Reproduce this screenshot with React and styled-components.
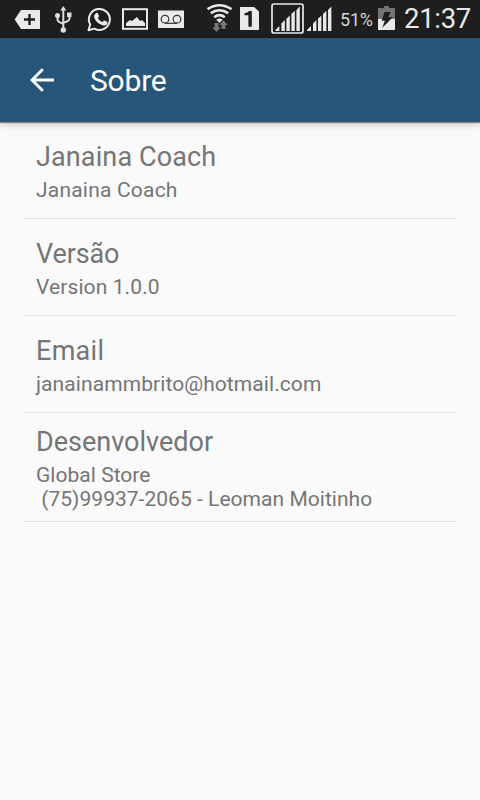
import React from 'react';
import styled, { createGlobalStyle } from 'styled-components';

const GlobalStyle = createGlobalStyle`
  * { box-sizing: border-box; }
  body { margin: 0; background: #fafafa; font-family: Roboto, "Noto Sans", sans-serif; }
`;

const Screen = styled.div`
  display: flex;
  flex-direction: column;
  width: 480px;
  height: 800px;
  overflow: hidden;
  background: #fafafa;
`;

const StatusBar = styled.header`
  display: flex;
  align-items: flex-start;
  height: 38px;
  flex: none;
  background: #1e1e1e;
  color: #e9e9e9;
`;

const StatusIcon = styled.svg`
  display: block;
  flex: none;
  width: ${(p) => p.$width}px;
  height: 38px;
  margin-left: ${(p) => p.$gap}px;
`;

const BatteryText = styled.span`
  flex: none;
  width: 35px;
  margin-left: 7px;
  padding-top: 9px;
  font-size: 18px;
  line-height: 22px;
  letter-spacing: -0.2px;
  white-space: nowrap;
  color: #d6d6d6;
`;

const Clock = styled.time`
  flex: none;
  margin-left: 9px;
  padding-top: 3px;
  font-size: 27.5px;
  line-height: 32px;
  letter-spacing: -0.3px;
  white-space: nowrap;
`;

const Toolbar = styled.nav`
  display: flex;
  align-items: center;
  flex: none;
  height: 84px;
  padding-left: 27px;
  background: #28567a;
  color: #fff;
  border-bottom: 1px solid #38566d;
  box-shadow: 0 1px 1px rgba(0, 0, 0, 0.4), 0 3px 7px rgba(0, 0, 0, 0.18);
`;

const BackButton = styled.button`
  display: flex;
  width: 30px;
  height: 30px;
  padding: 0;
  border: 0;
  background: none;
  color: inherit;
`;

const PageTitle = styled.h1`
  margin: 2px 0 0 33px;
  font-size: 30px;
  line-height: 36px;
  font-weight: 400;
  letter-spacing: -0.2px;
`;

const List = styled.main`
  padding: 0 24px;
`;

const Item = styled.section`
  height: ${(p) => (p.$tall ? 109 : 97)}px;
  padding: ${(p) => (p.$tall ? 13 : 19)}px 12px 0;
  border-bottom: 1px solid #dedede;
  color: #757575;
`;

const ItemTitle = styled.h2`
  margin: 0 0 5px;
  font-size: 27px;
  line-height: 32px;
  font-weight: 400;
  letter-spacing: ${(p) => p.$spacing}px;
`;

const ItemText = styled.p`
  margin: 0;
  font-size: 21px;
  line-height: 24px;
  letter-spacing: ${(p) => p.$spacing}px;
  white-space: pre;
`;

const items = [
  { title: 'Janaina Coach', text: 'Janaina Coach', titleSpacing: 0.12, textSpacing: 0.2 },
  { title: 'Versão', text: 'Version 1.0.0', titleSpacing: -0.15, textSpacing: 0.1 },
  { title: 'Email', text: 'janainammbrito@hotmail.com', titleSpacing: 0.3, textSpacing: 0.08 },
  {
    title: 'Desenvolvedor',
    text: 'Global Store\n (75)99937-2065 - Leoman Moitinho',
    titleSpacing: 0,
    textSpacing: 0.03,
    tall: true,
  },
];

const SignalBars = ({ x }) => (
  <g fill="#e9e9e9">
    <path d={`M${x} 31v-1l4-4v5z`} />
    <path d={`M${x + 6} 31v-7.5l3.4-3.4v10.9z`} />
    <path d={`M${x + 11} 31v-12.3l3.4-3.3v15.6z`} />
    <path d={`M${x + 16} 31v-17l3.4-3.3v20.3z`} />
    <path d={`M${x + 21} 31v-21l3.4-3.4v24.4z`} />
  </g>
);

function Status() {
  return (
    <StatusBar>
      <StatusIcon $width={26} $gap={14} viewBox="14 0 26 38">
        <path d="M14.7 19.5 21 10H40v19H21z" fill="#e9e9e9" />
        <path d="M24 19.5h11M29.5 14v11" stroke="#1e1e1e" strokeWidth="2.4" />
      </StatusIcon>
      <StatusIcon $width={18} $gap={14} viewBox="54 0 18 38" fill="none" stroke="#dedede" strokeWidth="2">
        <path d="M63.3 9v21M57.5 15v4.5q0 2.5 5.8 4.2M69.5 15v3.5q0 2.5-6.2 4.2" />
        <path d="M63.3 6l3 4.5h-6z" fill="#dedede" stroke="none" />
        <circle cx="57.5" cy="15.5" r="2.5" fill="#dedede" stroke="none" />
        <rect x="67" y="12.5" width="4.5" height="4.5" fill="#dedede" stroke="none" />
        <circle cx="63.3" cy="30" r="2.7" fill="#dedede" stroke="none" />
      </StatusIcon>
      <StatusIcon $width={25} $gap={15} viewBox="87 0 25 38">
        <path d="M88.5 30.3 90.2 24.5A10.5 10.5 0 1 1 94.3 28.6z" fill="none" stroke="#e9e9e9" strokeWidth="2" strokeLinejoin="round" />
        <path d="M96 13.2c.8-.6 1.6-.5 2 .4l.9 2c.3.8-.1 1.3-1 2.3 1 2 2.6 3.4 4.6 4.2 1-1.2 1.4-1.8 2.1-1.5l2.3 1.1c.8.4.8.7.5 1.7-.5 1.6-2.7 2.4-4.4 2-4.3-1-8.2-4.6-8.9-8.3-.3-1.5.6-3 1.9-3.9z" fill="#e9e9e9" />
      </StatusIcon>
      <StatusIcon $width={26} $gap={10} viewBox="122 0 26 38">
        <rect x="123" y="9.2" width="24" height="19.6" fill="none" stroke="#e9e9e9" strokeWidth="2" />
        <path d="M126 26v-3l4-3 2 1 5-4 3 4 2-1 3 3v3z" fill="#e9e9e9" />
      </StatusIcon>
      <StatusIcon $width={26} $gap={10} viewBox="158 0 26 38">
        <rect x="158" y="10.5" width="26" height="17.5" fill="#e9e9e9" />
        <g fill="none" stroke="#333" strokeWidth="1.2">
          <circle cx="165" cy="19.2" r="3.8" />
          <circle cx="177" cy="19.2" r="3.8" />
          <path d="M165 23.3h12" />
        </g>
      </StatusIcon>
      <StatusIcon $width={26} $gap={23} viewBox="207 0 26 38">
        <g fill="none" stroke="#e9e9e9" strokeWidth="2.6">
          <path d="M207.5 9.2Q219.5 1.2 231.5 9.2" />
          <path d="M210.8 13.2Q219.5 7.3 228.2 13.2" />
          <path d="M214.2 17.2Q219.5 13 224.8 17.2" />
        </g>
        <path d="M216.3 19.8Q219.5 17.3 222.7 19.8L219.5 23z" fill="#e9e9e9" />
        <path d="M214.5 23h4v4.5h2.2L216.5 32l-4.2-4.5h2.2zM221.6 29v-4h-2.3l4.2-4.8 4.2 4.8h-2.3v4z" fill="#777" />
      </StatusIcon>
      <StatusIcon $width={19} $gap={7} viewBox="240 0 19 38">
        <path d="M240 7h14l5 4.5V30h-19z" fill="#e9e9e9" />
        <path d="M244.5 13.2q3.5-.3 4.5-2.2h2.8v15.7h-3.4V15.2h-3.9z" fill="#1e1e1e" />
      </StatusIcon>
      <StatusIcon $width={34} $gap={12} viewBox="271 0 34 38">
        <rect x="272" y="4" width="31" height="29" rx="2" fill="none" stroke="#e9e9e9" strokeWidth="1.7" />
        <SignalBars x={275.4} />
      </StatusIcon>
      <StatusIcon $width={26} $gap={2} viewBox="307 0 26 38">
        <SignalBars x={307} />
      </StatusIcon>
      <BatteryText>51%</BatteryText>
      <StatusIcon $width={17} $gap={3} viewBox="378 0 17 38">
        <path d="M384 6h5v2h6v11h-17V8h6z" fill="#747474" />
        <path d="M378 19h17v11h-17z" fill="#e9e9e9" />
        <path d="M384.5 12h6l-2.2 5.2h4.4L382.2 28l2.7-7.3h-3.3z" fill="#1e1e1e" />
      </StatusIcon>
      <Clock>21:37</Clock>
    </StatusBar>
  );
}

export default function App() {
  return (
    <Screen>
      <GlobalStyle />
      <Status />
      <Toolbar>
        <BackButton aria-label="Voltar">
          <svg width="30" height="30" viewBox="0 0 30 30" fill="none" stroke="currentColor" strokeWidth="2.8">
            <path d="M15.8 4.2 5 15l10.8 10.8M4.5 15H27" />
          </svg>
        </BackButton>
        <PageTitle>Sobre</PageTitle>
      </Toolbar>
      <List>
        {items.map((item) => (
          <Item key={item.title} $tall={item.tall}>
            <ItemTitle $spacing={item.titleSpacing}>{item.title}</ItemTitle>
            <ItemText $spacing={item.textSpacing}>{item.text}</ItemText>
          </Item>
        ))}
      </List>
    </Screen>
  );
}
